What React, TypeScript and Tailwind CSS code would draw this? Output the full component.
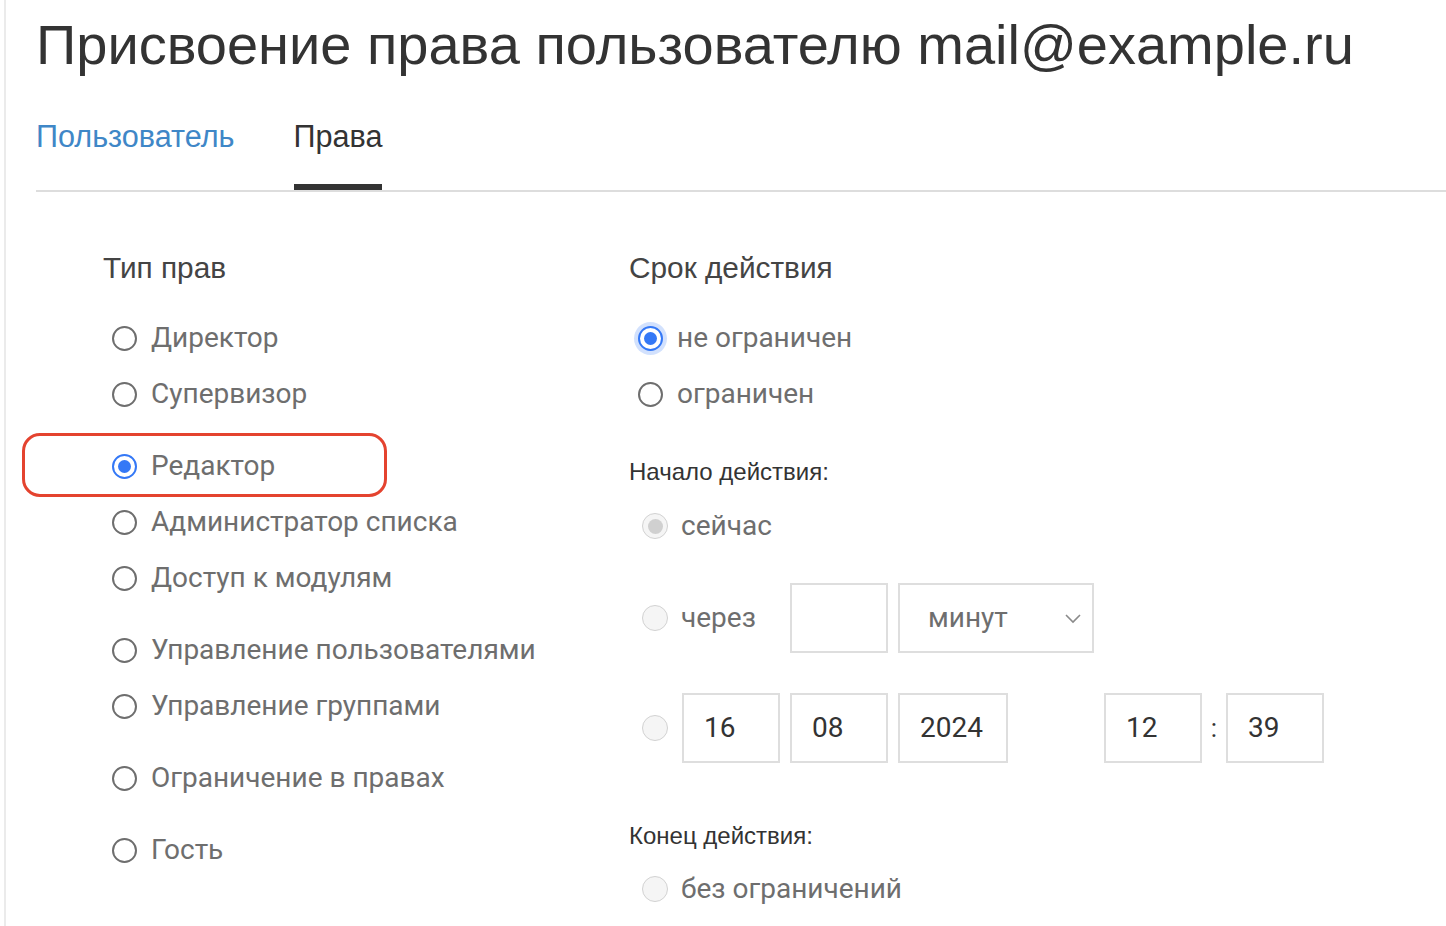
import React from "react";

type RadioState = "off" | "on" | "focus" | "disabled" | "disabledOn";

const LABEL_FONT = { fontFamily: "Roboto, 'Noto Sans', sans-serif" };
const HEAD_FONT = { fontFamily: "'Liberation Sans', Arial, sans-serif" };

function Radio({ state }: { state: RadioState }) {
  if (state === "on" || state === "focus") {
    return (
      <span
        className={`flex h-[25px] w-[25px] shrink-0 items-center justify-center rounded-full border-2 border-[#3478f6] bg-white ${
          state === "focus" ? "shadow-[0_0_0_4px_rgba(52,120,246,0.22)]" : ""
        }`}
      >
        <span className="h-[13px] w-[13px] rounded-full bg-[#3478f6]" />
      </span>
    );
  }
  if (state === "disabled" || state === "disabledOn") {
    return (
      <span className="flex h-[26px] w-[26px] shrink-0 items-center justify-center rounded-full border-[1.5px] border-[#d2d2d2] bg-[#f5f5f5]">
        {state === "disabledOn" && (
          <span className="h-[15px] w-[15px] rounded-full bg-[#d0d0d0]" />
        )}
      </span>
    );
  }
  return (
    <span className="h-[25px] w-[25px] shrink-0 rounded-full border-2 border-[#6e6e6e] bg-white" />
  );
}

const RIGHTS = [
  { label: "Директор", gap: false },
  { label: "Супервизор", gap: false },
  { label: "Редактор", gap: true, checked: true },
  { label: "Администратор списка", gap: false },
  { label: "Доступ к модулям", gap: false },
  { label: "Управление пользователями", gap: true },
  { label: "Управление группами", gap: false },
  { label: "Ограничение в правах", gap: true },
  { label: "Гость", gap: true },
];

function Box({ value, w }: { value?: string; w: string }) {
  return (
    <div
      className={`flex h-[70px] ${w} items-center border-2 border-[#dedede] bg-white pl-[20px] text-[28px] text-[#333]`}
      style={LABEL_FONT}
    >
      {value}
    </div>
  );
}

export default function App() {
  return (
    <div className="min-h-[926px] bg-white">
      <div className="ml-[4px] min-h-[926px] border-l-2 border-[#ebebeb] pl-[30px]">
        <h1
          className="h-[90px] text-[56px] leading-[90px] text-[#333] whitespace-nowrap"
          style={HEAD_FONT}
        >
          Присвоение права пользователю mail@example.ru
        </h1>

        <div className="flex gap-[59px] border-b-2 border-[#dddddd]" style={HEAD_FONT}>
          <div className="border-b-[6px] border-transparent pt-[28px] pb-[30px] text-[30.6px] leading-[36px] text-[#3f87c7]">
            Пользователь
          </div>
          <div className="border-b-[6px] border-[#333] pt-[28px] pb-[30px] text-[30.6px] leading-[36px] text-[#333]">
            Права
          </div>
        </div>

        <div className="flex">
          {/* left column: rights type */}
          <div className="w-[593px] shrink-0">
            <div
              className="mt-[56px] pl-[67px] text-[29.8px] leading-[40px] text-[#444]"
              style={HEAD_FONT}
            >
              Тип прав
            </div>
            <div className="mt-[22px] pl-[76px]">
              {RIGHTS.map((r, i) => (
                <div
                  key={r.label}
                  className={`relative flex h-[56px] items-center gap-[14px] ${
                    r.gap && i > 0 ? "mt-[16px]" : ""
                  }`}
                >
                  {r.checked && (
                    <span className="absolute -left-[90px] -top-[5px] h-[64px] w-[365px] rounded-[18px] border-[3px] border-[#e4432f]" />
                  )}
                  <Radio state={r.checked ? "on" : "off"} />
                  <span className="text-[28px] text-[#6e6e6e]" style={LABEL_FONT}>
                    {r.label}
                  </span>
                </div>
              ))}
            </div>
          </div>

          {/* right column: validity */}
          <div className="flex-1">
            <div
              className="mt-[56px] text-[29.8px] leading-[40px] text-[#444]"
              style={HEAD_FONT}
            >
              Срок действия
            </div>
            <div className="mt-[22px] pl-[9px]">
              <div className="flex h-[56px] items-center gap-[14px]">
                <Radio state="focus" />
                <span className="text-[28px] text-[#6e6e6e]" style={LABEL_FONT}>
                  не ограничен
                </span>
              </div>
              <div className="flex h-[56px] items-center gap-[14px]">
                <Radio state="off" />
                <span className="text-[28px] text-[#6e6e6e]" style={LABEL_FONT}>
                  ограничен
                </span>
              </div>
            </div>

            <div
              className="mt-[35px] text-[24px] leading-[30px] text-[#333]"
              style={HEAD_FONT}
            >
              Начало действия:
            </div>

            <div className="pl-[13px]">
              <div className="mt-[11px] flex h-[56px] items-center gap-[13px]">
                <Radio state="disabledOn" />
                <span className="text-[28px] text-[#6e6e6e]" style={LABEL_FONT}>
                  сейчас
                </span>
              </div>

              <div className="mt-[29px] flex items-center">
                <div className="flex w-[148px] items-center gap-[13px]">
                  <Radio state="disabled" />
                  <span className="text-[28px] text-[#6e6e6e]" style={LABEL_FONT}>
                    через
                  </span>
                </div>
                <Box w="w-[98px]" />
                <div
                  className="ml-[10px] flex h-[70px] w-[196px] items-center justify-between border-2 border-[#dedede] bg-white pl-[28px] pr-[10px] text-[28px] text-[#6e6e6e]"
                  style={LABEL_FONT}
                >
                  минут
                  <svg width="18" height="12" viewBox="0 0 18 12" fill="none">
                    <path d="M2 3l7 7 7-7" stroke="#8a8a8a" strokeWidth="1.6" />
                  </svg>
                </div>
              </div>

              <div className="mt-[40px] flex items-center">
                <Radio state="disabled" />
                <div className="ml-[14px] flex items-center gap-[10px]">
                  <Box w="w-[98px]" value="16" />
                  <Box w="w-[98px]" value="08" />
                  <Box w="w-[110px]" value="2024" />
                </div>
                <div className="ml-[96px] flex items-center">
                  <Box w="w-[98px]" value="12" />
                  <span
                    className="w-[24px] text-center text-[26px] text-[#333]"
                    style={LABEL_FONT}
                  >
                    :
                  </span>
                  <Box w="w-[98px]" value="39" />
                </div>
              </div>
            </div>

            <div
              className="mt-[58px] text-[24px] leading-[30px] text-[#333]"
              style={HEAD_FONT}
            >
              Конец действия:
            </div>
            <div className="mt-[10px] flex h-[56px] items-center gap-[13px] pl-[13px]">
              <Radio state="disabled" />
              <span className="text-[28px] text-[#6e6e6e]" style={LABEL_FONT}>
                без ограничений
              </span>
            </div>
          </div>
        </div>
      </div>
    </div>
  );
}
